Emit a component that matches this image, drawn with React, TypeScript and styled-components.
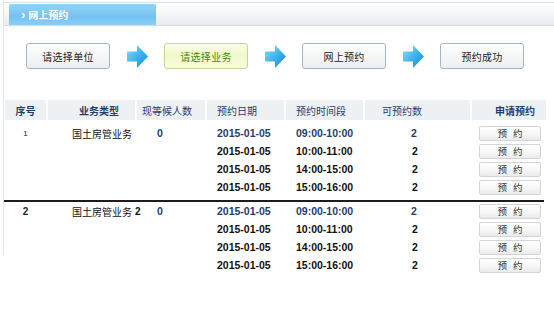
import React from "react";
import styled, { createGlobalStyle } from "styled-components";

const Global = createGlobalStyle`
  html, body { margin: 0; padding: 0; background: #fff; }
  body { font-family: "Noto Sans CJK SC", "Liberation Sans", sans-serif; color: #111; }
`;

const Panel = styled.div`
  margin-left: 3px;
  padding-top: 2px;
  padding-left: 1px;
  padding-bottom: 30px;
  background: linear-gradient(#dfe5eb, #dfe5eb) left top / 1px 255px no-repeat;
`;

const HeaderBar = styled.div`
  height: 22px;
  border-top: 1px solid #d9e2ea;
  border-bottom: 1px solid #d4dce4;
  background: linear-gradient(180deg, #ffffff 0%, #f3f5f7 55%, #e9edf1 100%);
  display: flex;
  align-items: flex-end;
  padding-left: 5px;
`;

const Tab = styled.div`
  width: 147px;
  height: 21px;
  border-radius: 2px 2px 0 0;
  background: linear-gradient(180deg, #93d3f8 0%, #73c3f3 60%, #8ccdf5 100%);
  color: #fff;
  font-size: 10px;
  font-weight: 700;
  display: flex;
  align-items: center;
  padding-left: 12px;
  gap: 3px;
  box-sizing: border-box;
`;

const Chevron = styled.span`
  font-family: "Liberation Sans", sans-serif;
  font-size: 13px;
  line-height: 1;
  margin-top: -1px;
`;

const Steps = styled.div`
  margin-top: 17px;
  padding-left: 22px;
  display: flex;
  align-items: center;
  height: 26px;
`;

const StepButton = styled.div<{ $active?: boolean }>`
  width: 84px;
  height: 26px;
  box-sizing: border-box;
  border-radius: 3px;
  border: 1px solid ${(p) => (p.$active ? "#c6d39a" : "#9fb8cc")};
  background: ${(p) =>
    p.$active
      ? "linear-gradient(180deg, #fbfde9 0%, #f1f8c8 50%, #fbfdde 100%)"
      : "linear-gradient(180deg, #ffffff 0%, #f5f6f7 50%, #eceef0 100%)"};
  color: ${(p) => (p.$active ? "#3f8a17" : "#222")};
  font-size: 10px;
  display: flex;
  align-items: center;
  justify-content: center;
  letter-spacing: 0.3px;
`;

const ArrowBox = styled.div`
  width: 21px;
  height: 23px;
  margin: 0 16px 0 17px;
  display: flex;
`;

const Arrow = () => (
  <ArrowBox>
    <svg width="21" height="23" viewBox="0 0 21 23">
      <defs>
        <linearGradient id="ag" x1="0" y1="0" x2="1" y2="1">
          <stop offset="0" stopColor="#8fe0fc" />
          <stop offset="0.5" stopColor="#3fb4ee" />
          <stop offset="1" stopColor="#1a86d4" />
        </linearGradient>
      </defs>
      <path d="M0 6.5 H10 V0 L21 11.5 L10 23 V16.5 H0 Z" fill="url(#ag)" />
    </svg>
  </ArrowBox>
);

const cols = "41px 87px 68px 77px 77px 105px 74px";

const Table = styled.div`
  margin-top: 31px;
  margin-left: 1px;
`;

const HeadRow = styled.div`
  display: grid;
  grid-template-columns: ${cols};
  column-gap: 2px;
  height: 20px;
  margin-bottom: 4px;
`;

const HeadCell = styled.div<{ $pad?: number; $center?: boolean; $bold?: boolean }>`
  background: #eef1f4;
  color: #1f3d6d;
  font-size: 10px;
  font-weight: ${(p) => (p.$bold ? 700 : 400)};
  display: flex;
  align-items: center;
  justify-content: ${(p) => (p.$center ? "center" : "flex-start")};
  padding-left: ${(p) => p.$pad ?? 0}px;
  white-space: nowrap;
`;

const Row = styled.div`
  display: grid;
  grid-template-columns: ${cols};
  column-gap: 2px;
  height: 18px;
`;

const Cell = styled.div<{ $pad?: number; $center?: boolean }>`
  display: flex;
  align-items: center;
  justify-content: ${(p) => (p.$center ? "center" : "flex-start")};
  padding-left: ${(p) => p.$pad ?? 0}px;
  font-size: 10px;
  white-space: nowrap;
`;

const Index = styled.span<{ $big?: boolean }>`
  font-family: "Liberation Sans", sans-serif;
  font-size: ${(p) => (p.$big ? "10px" : "8px")};
  font-weight: ${(p) => (p.$big ? 700 : 400)};
  color: #222;
`;

const Bold = styled.b`
  font-family: "Liberation Sans", sans-serif;
  font-weight: 700;
  margin-left: 3px;
`;

const Num = styled.span<{ $navy?: boolean }>`
  font-family: "Liberation Sans", sans-serif;
  font-weight: 700;
  font-size: 10.5px;
  color: ${(p) => (p.$navy ? "#1f3d6d" : "#111")};
`;

const BookButton = styled.div`
  width: 62px;
  height: 15px;
  box-sizing: border-box;
  border: 1px solid #d2d5d8;
  border-radius: 2px;
  background: linear-gradient(180deg, #ffffff 0%, #f7f7f7 55%, #e9eaeb 100%);
  font-size: 9.5px;
  color: #333;
  display: flex;
  align-items: center;
  justify-content: center;
  letter-spacing: 6px;
  padding-left: 6px;
`;

const Divider = styled.div`
  width: 540px;
  margin: 4px 0 0 -1px;
  height: 2px;
  background: #1c1c1c;
`;

const times = ["09:00-10:00", "10:00-11:00", "14:00-15:00", "15:00-16:00"];

type Group = { idx: string; big: boolean; name: React.ReactNode };

const groups: Group[] = [
  { idx: "1", big: false, name: "国土房管业务" },
  { idx: "2", big: true, name: (<>国土房管业务<Bold>2</Bold></>) },
];

export default function App() {
  return (
    <>
      <Global />
      <Panel>
        <HeaderBar>
          <Tab>
            <Chevron>›</Chevron>网上预约
          </Tab>
        </HeaderBar>
        <Steps>
          <StepButton>请选择单位</StepButton>
          <Arrow />
          <StepButton $active>请选择业务</StepButton>
          <Arrow />
          <StepButton>网上预约</StepButton>
          <Arrow />
          <StepButton>预约成功</StepButton>
        </Steps>
        <Table>
          <HeadRow>
            <HeadCell $center $bold>序号</HeadCell>
            <HeadCell $pad={31} $bold>业务类型</HeadCell>
            <HeadCell $pad={5}>现等候人数</HeadCell>
            <HeadCell $pad={10}>预约日期</HeadCell>
            <HeadCell $pad={10}>预约时间段</HeadCell>
            <HeadCell $pad={17}>可预约数</HeadCell>
            <HeadCell $pad={23} $bold>申请预约</HeadCell>
          </HeadRow>
          {groups.map((g, gi) => (
            <React.Fragment key={g.idx}>
              {gi > 0 && <Divider />}
              {times.map((t, i) => (
                <Row key={t}>
                  <Cell $center>{i === 0 && <Index $big={g.big}>{g.idx}</Index>}</Cell>
                  <Cell $pad={24}>{i === 0 && g.name}</Cell>
                  <Cell $pad={20}>{i === 0 && <Num $navy>0</Num>}</Cell>
                  <Cell $pad={10}><Num $navy={i === 0}>2015-01-05</Num></Cell>
                  <Cell $pad={10}><Num $navy={i === 0}>{t}</Num></Cell>
                  <Cell $pad={i === 0 ? 46 : 47}><Num $navy={i === 0}>2</Num></Cell>
                  <Cell $pad={7}><BookButton>预约</BookButton></Cell>
                </Row>
              ))}
            </React.Fragment>
          ))}
        </Table>
      </Panel>
    </>
  );
}
